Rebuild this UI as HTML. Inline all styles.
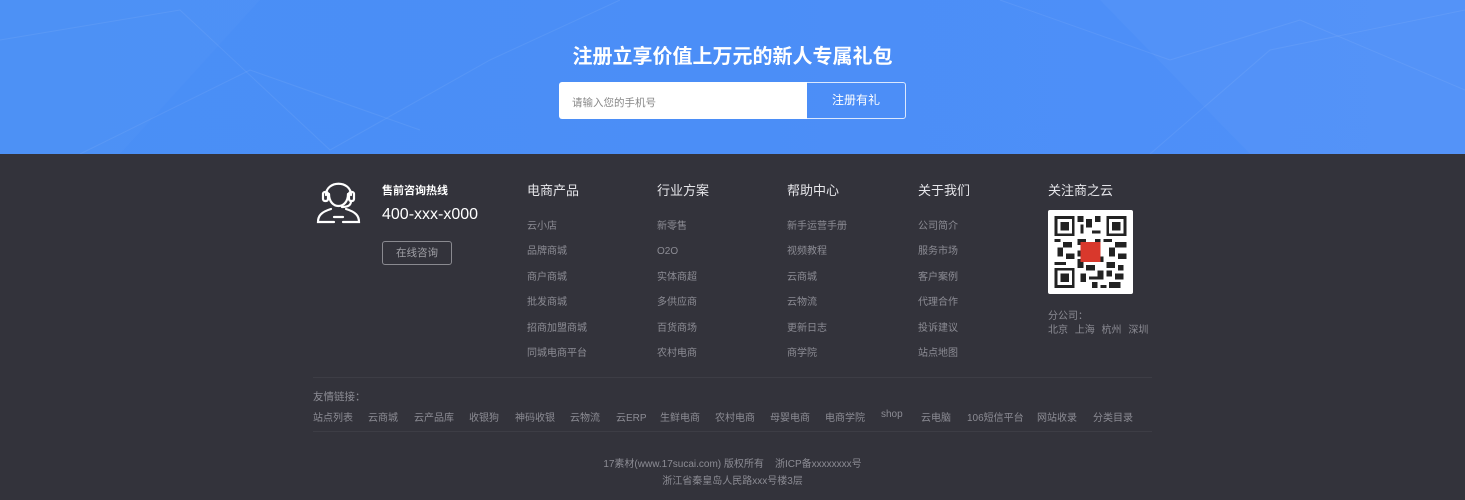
<!DOCTYPE html>
<html><head><meta charset="utf-8"><style>
*{margin:0;padding:0;box-sizing:border-box}
body{width:1465px;height:500px;overflow:hidden;font-family:"Liberation Sans","Noto Sans CJK SC",sans-serif;background:#33333b;position:relative}
.banner{position:absolute;left:0;top:0;width:1465px;height:154px;background:linear-gradient(90deg,#4a8ff5,#4b8ef7 50%,#4f90f8);overflow:hidden}
.a{position:absolute;white-space:nowrap}
.h{color:#e6e6ea;font-size:13px}
.l{color:#8c8c94;font-size:10px}
.f{color:#8c8c94;font-size:10px;top:409px}
</style></head><body>
<div class="banner">
<svg width="1465" height="154" style="position:absolute;left:0;top:0">
<g stroke="rgba(255,255,255,0.07)" fill="none" stroke-width="1">
<polyline points="0,40 180,10 330,150 490,60 620,0"/>
<polyline points="1000,0 1170,60 1300,20 1465,90"/>
<polyline points="1150,154 1270,50 1465,10"/>
<polyline points="80,154 250,70 420,130"/>
</g>
<polygon points="1100,0 1465,0 1465,154 1250,154" fill="rgba(255,255,255,0.03)"/>
<polygon points="0,0 260,0 120,154 0,154" fill="rgba(255,255,255,0.02)"/>
</svg>
<div class="a" style="left:0;width:1465px;text-align:center;top:40px;color:#fff;font-size:20px;font-weight:bold">注册立享价值上万元的新人专属礼包</div>
<div class="a" style="left:559px;top:82px;width:248px;height:37px;background:#fff;border-radius:3px 0 0 3px"></div>
<div class="a" style="left:572px;top:95px;color:#888;font-size:10.5px">请输入您的手机号</div>
<div class="a" style="left:806px;top:82px;width:100px;height:37px;border:1px solid rgba(255,255,255,0.8);border-radius:0 3px 3px 0;color:#fff;font-size:12px;text-align:center;line-height:35px">注册有礼</div>
</div>

<svg class="a" style="left:316px;top:180px" width="46" height="44" viewBox="0 0 46 44" fill="none" stroke="#fff" stroke-width="2.2" stroke-linecap="round">
<path d="M10 15 C10 0 35 0 35 15"/>
<path d="M13 14 C13 30 32 30 32 14"/>
<rect x="7" y="12" width="5" height="9" rx="2"/>
<rect x="33" y="12" width="5" height="9" rx="2"/>
<path d="M35 21 C35 26 31 27 26 27"/>
<path d="M15 29 C5 32 2 36 2 42 L18 42"/>
<path d="M30 29 C40 32 43 36 43 42 L27 42"/>
<path d="M18 37 L27 37"/>
</svg>
<div class="a" style="left:382px;top:182px;color:#fff;font-size:11px;font-weight:bold">售前咨询热线</div>
<div class="a" style="left:382px;top:206px;color:#fff;font-size:16px">400-xxx-x000</div>
<div class="a" style="left:382px;top:241px;width:70px;height:24px;border:1px solid #8a8a90;border-radius:3px;color:#a0a0a6;font-size:10.5px;text-align:center;line-height:22px">在线咨询</div>

<div class="a h" style="left:527px;top:180px">电商产品</div>
<div class="a h" style="left:657px;top:180px">行业方案</div>
<div class="a h" style="left:787px;top:180px">帮助中心</div>
<div class="a h" style="left:918px;top:180px">关于我们</div>
<div class="a h" style="left:1048px;top:180px">关注商之云</div>

<div class="a l" style="left:527px;top:214px;line-height:25.4px">云小店<br>品牌商城<br>商户商城<br>批发商城<br>招商加盟商城<br>同城电商平台</div>
<div class="a l" style="left:657px;top:214px;line-height:25.4px">新零售<br>O2O<br>实体商超<br>多供应商<br>百货商场<br>农村电商</div>
<div class="a l" style="left:787px;top:214px;line-height:25.4px">新手运营手册<br>视频教程<br>云商城<br>云物流<br>更新日志<br>商学院</div>
<div class="a l" style="left:918px;top:214px;line-height:25.4px">公司简介<br>服务市场<br>客户案例<br>代理合作<br>投诉建议<br>站点地图</div>

<div class="a" style="left:1048px;top:210px;width:85px;height:84px;background:#fff;border-radius:2px"></div>
<svg class="a" style="left:1054px;top:216px" width="73" height="72" viewBox="0 0 25 25" shape-rendering="crispEdges">
<g fill="#222">
<path d="M0 0h7v7h-7zM1 1v5h5v-5zM2 2h3v3h-3z" fill-rule="evenodd"/>
<path d="M18 0h7v7h-7zM19 1v5h5v-5zM20 2h3v3h-3z" fill-rule="evenodd"/>
<path d="M0 18h7v7h-7zM1 19v5h5v-5zM2 20h3v3h-3z" fill-rule="evenodd"/>
<path d="M8 0h2v2h-2zM11 1h2v3h-2zM14 0h2v2h-2zM9 3h1v3h-1zM13 5h3v1h-3zM8 8h3v2h-3zM0 8h2v1h-2zM3 9h3v2h-3zM1 11h2v3h-2zM4 13h3v2h-3zM0 16h4v1h-4zM14 8h2v2h-2zM17 8h3v1h-3zM21 9h4v2h-4zM19 11h2v3h-2zM22 13h3v2h-3zM18 16h3v2h-3zM8 15h2v3h-2zM11 17h3v2h-3zM9 20h2v3h-2zM12 21h3v1h-3zM15 19h2v3h-2zM18 19h2v2h-2zM21 20h3v2h-3zM19 23h4v2h-4zM13 23h2v2h-2zM16 24h2v1h-2zM8 12h1v2h-1zM16 14h1v2h-1zM22 17h2v2h-2z"/>
</g>
<rect x="9" y="9" width="7" height="7" fill="#d9382c"/>
</svg>
<div class="a l" style="left:1048px;top:307px;font-size:10px">分公司：</div>
<div class="a l" style="left:1048px;top:321px;font-size:10px;word-spacing:4px">北京 上海 杭州 深圳</div>

<div class="a" style="left:313px;top:377px;width:839px;height:1px;background:#3d3d45"></div>
<div class="a l" style="left:313px;top:389px;font-size:10.5px">友情链接：</div>
<div class="a f" style="left:313px">站点列表</div>
<div class="a f" style="left:368px">云商城</div>
<div class="a f" style="left:414px">云产品库</div>
<div class="a f" style="left:469px">收银狗</div>
<div class="a f" style="left:515px">神码收银</div>
<div class="a f" style="left:570px">云物流</div>
<div class="a f" style="left:616px">云ERP</div>
<div class="a f" style="left:660px">生鲜电商</div>
<div class="a f" style="left:715px">农村电商</div>
<div class="a f" style="left:770px">母婴电商</div>
<div class="a f" style="left:825px">电商学院</div>
<div class="a f" style="left:881px">shop</div>
<div class="a f" style="left:921px">云电脑</div>
<div class="a f" style="left:967px">106短信平台</div>
<div class="a f" style="left:1037px">网站收录</div>
<div class="a f" style="left:1093px">分类目录</div>
<div class="a" style="left:313px;top:431px;width:839px;height:1px;background:#3d3d45"></div>
<div class="a l" style="left:0;width:1465px;text-align:center;top:455px">17素材(www.17sucai.com) 版权所有 &nbsp;&nbsp;&nbsp;浙ICP备xxxxxxxx号</div>
<div class="a l" style="left:0;width:1465px;text-align:center;top:472px">浙江省秦皇岛人民路xxx号楼3层</div>
</body></html>
